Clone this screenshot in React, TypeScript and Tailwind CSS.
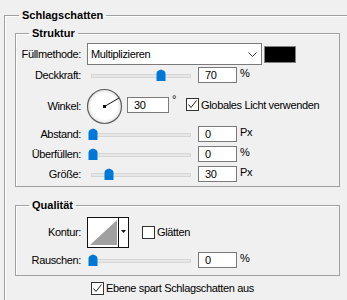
import React from 'react';

const font = { fontFamily: '"Liberation Sans", Arial, sans-serif' };

function Thumb() {
  return (
    <svg width="10" height="12" viewBox="0 0 10 12">
      <path d="M0.5 4.5 Q0.5 1.5 5 0.5 Q9.5 1.5 9.5 4.5 V12 H0.5 Z" fill="#0078d7" />
    </svg>
  );
}

function Slider({ offset }: { offset: number }) {
  return (
    <div className="relative h-[12px] w-[104px] shrink-0">
      <div className="absolute left-[4px] right-0 top-[5px] h-[4px] border border-[#d6d6d6] bg-[#e7e7e7]" />
      <div className="absolute top-0" style={{ left: offset }}>
        <Thumb />
      </div>
    </div>
  );
}

function NumInput({ value, w = 39 }: { value: string; w?: number }) {
  return (
    <div
      className="h-[16px] shrink-0 border border-[#7a7a7a] bg-white pl-[6px] text-[11px] leading-[14px]"
      style={{ width: w }}
    >
      {value}
    </div>
  );
}

function Check({ checked }: { checked: boolean }) {
  return (
    <div className="flex h-[13px] w-[13px] shrink-0 items-center justify-center border border-[#333] bg-white">
      {checked && (
        <svg width="11" height="11" viewBox="0 0 11 11">
          <path d="M1.5 5.5 L4 8.5 L9.5 1.5" fill="none" stroke="#222" strokeWidth="1" />
        </svg>
      )}
    </div>
  );
}

function Label({ children }: { children: React.ReactNode }) {
  return <div className="w-[66px] shrink-0 pr-[1px] text-right">{children}</div>;
}

function SliderRow({ label, offset, value, unit }: { label: string; offset: number; value: string; unit: string }) {
  return (
    <div className="flex h-[20px] items-center">
      <Label>{label}</Label>
      <div className="ml-[5px] flex items-center">
        <Slider offset={offset} />
        <div className="ml-[7px]">
          <NumInput value={value} />
        </div>
        <div className="ml-[3px] -mt-[5px]">{unit}</div>
      </div>
    </div>
  );
}

function Dial() {
  return (
    <svg width="37" height="37" viewBox="0 0 37 37">
      <defs>
        <radialGradient id="dg" cx="50%" cy="50%" r="50%">
          <stop offset="75%" stopColor="#ffffff" />
          <stop offset="100%" stopColor="#e2e2e2" />
        </radialGradient>
      </defs>
      <circle cx="18.5" cy="18.5" r="17" fill="url(#dg)" stroke="#5c5c5c" strokeWidth="1.2" />
      <line x1="18.5" y1="18.5" x2="33" y2="10" stroke="#111" strokeWidth="1" />
      <rect x="17" y="17" width="3" height="3" fill="#111" />
    </svg>
  );
}

function Kontur() {
  return (
    <svg width="42" height="31" viewBox="0 0 42 31">
      <rect x="0.5" y="0.5" width="41" height="30" fill="#fff" stroke="#111" />
      <polygon points="3,28 30,3 30,28" fill="#a0a0a0" />
      <line x1="31.5" y1="1" x2="31.5" y2="30" stroke="#111" />
      <polygon points="34,13 39,13 36.5,16" fill="#111" />
    </svg>
  );
}

export default function App() {
  return (
    <div className="h-[300px] w-[347px] overflow-hidden bg-[#f0f0f0] text-[11px] leading-[14px] tracking-[-0.35px] text-black" style={font}>
      <fieldset className="ml-[4px] mt-[8px] h-[300px] w-[400px] border-0 border-l border-t border-[#a0a0a0] p-0 shadow-[inset_1px_1px_0_#fff]">
        <legend className="ml-[14px] px-[3px] font-bold tracking-normal">Schlagschatten</legend>

        <fieldset className="ml-[10px] mt-[4px] w-[325px] border border-[#a0a0a0] p-0 pb-[2px] shadow-[inset_1px_1px_0_#fff]">
          <legend className="ml-[13px] px-[3px] font-bold tracking-normal">Struktur</legend>

          <div className="mt-[3px] flex h-[22px] items-center">
            <Label>Füllmethode:</Label>
            <div className="relative ml-[5px] flex h-[22px] w-[175px] items-center border border-[#7a7a7a] bg-white pl-[3px]">
              Multiplizieren
              <svg className="absolute right-[4px] top-[8px]" width="9" height="5" viewBox="0 0 9 5">
                <path d="M0.5 0.5 L4.5 4.5 L8.5 0.5" fill="none" stroke="#333" strokeWidth="1" />
              </svg>
            </div>
            <div className="ml-[2px] h-[17px] w-[32px] border border-[#808080] bg-black" />
          </div>

          <SliderRow label="Deckkraft:" offset={69} value="70" unit="%" />

          <div className="mt-[3px] flex h-[36px] items-center">
            <Label>Winkel:</Label>
            <div className="ml-[4px] flex items-center">
              <Dial />
              <div className="ml-[4px] -mt-[2px]">
                <NumInput value="30" w={42} />
              </div>
              <div className="ml-[3px] -mt-[14px]">°</div>
              <div className="ml-[10px] -mt-[3px] flex items-center">
                <Check checked />
                <span className="ml-[2px]">Globales Licht verwenden</span>
              </div>
            </div>
          </div>

          <SliderRow label="Abstand:" offset={1} value="0" unit="Px" />
          <SliderRow label="Überfüllen:" offset={1} value="0" unit="%" />
          <SliderRow label="Größe:" offset={17} value="30" unit="Px" />
        </fieldset>

        <fieldset className="ml-[10px] mt-[11px] w-[325px] border border-[#a0a0a0] p-0 pb-[5px] shadow-[inset_1px_1px_0_#fff]">
          <legend className="ml-[13px] px-[3px] font-bold tracking-normal">Qualität</legend>

          <div className="mt-[4px] flex h-[32px] items-center">
            <Label>Kontur:</Label>
            <div className="ml-[5px] flex items-center">
              <Kontur />
              <div className="ml-[13px] flex items-center">
                <Check checked={false} />
                <span className="ml-[2px]">Glätten</span>
              </div>
            </div>
          </div>

          <div className="mt-[2px]">
            <SliderRow label="Rauschen:" offset={1} value="0" unit="%" />
          </div>
        </fieldset>

        <div className="mt-[2px] flex h-[20px] items-center pl-[86px]">
          <Check checked />
          <span className="ml-[2px]">Ebene spart Schlagschatten aus</span>
        </div>
      </fieldset>
    </div>
  );
}
